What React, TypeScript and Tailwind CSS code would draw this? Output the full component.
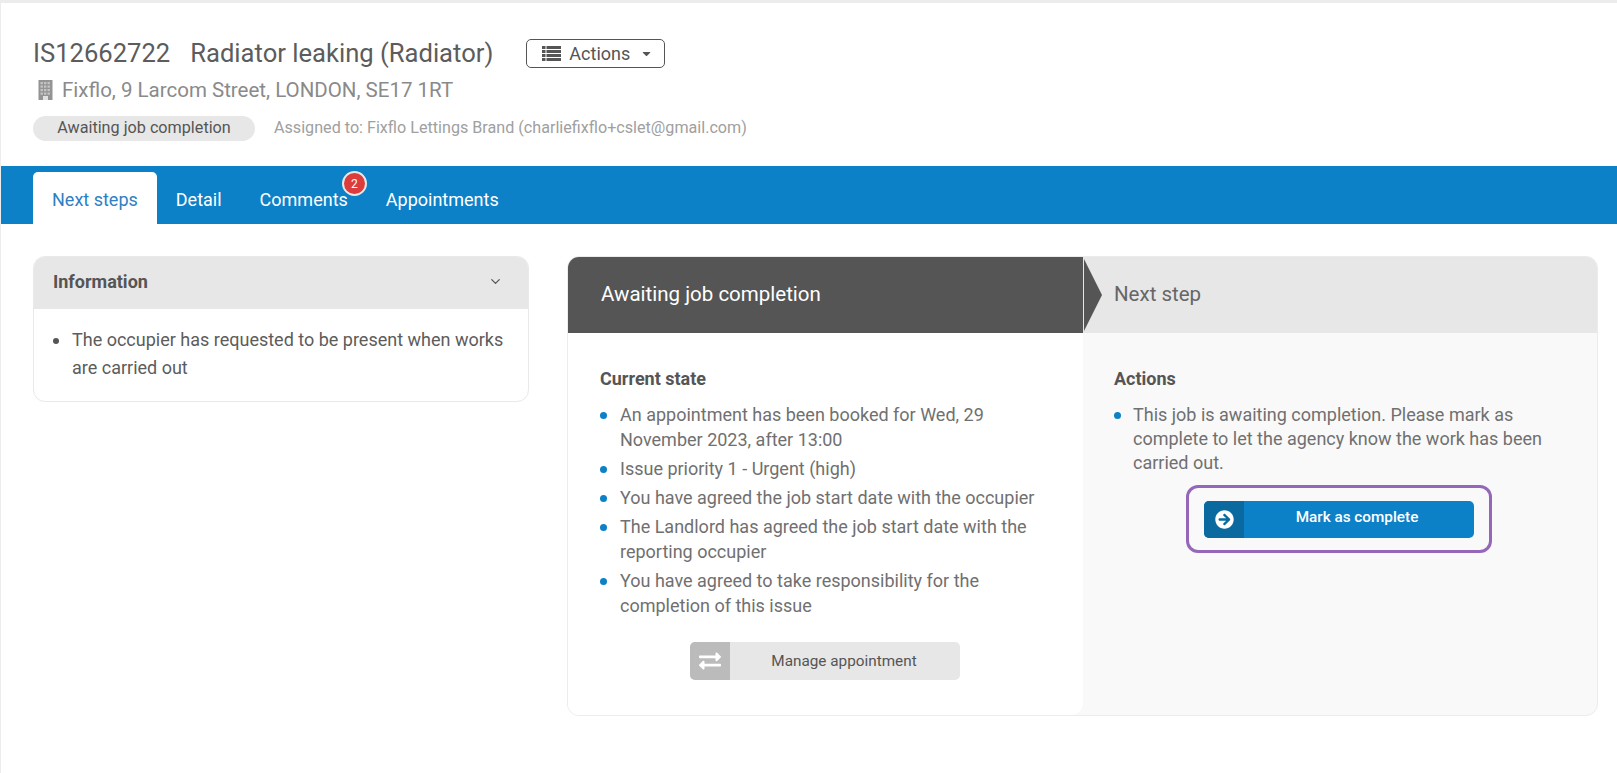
import { ChevronDown } from 'lucide-react';
import { FaArrowCircleRight, FaCaretDown, FaExchangeAlt } from 'react-icons/fa';

const currentState = [
  'An appointment has been booked for Wed, 29 November 2023, after 13:00',
  'Issue priority 1 - Urgent (high)',
  'You have agreed the job start date with the occupier',
  'The Landlord has agreed the job start date with the reporting occupier',
  'You have agreed to take responsibility for the completion of this issue',
];

const windows = [2, 5.5, 9, 12.5].flatMap((y) => [3, 6.5, 10].map((x) => ({ x, y })));

const BuildingIcon: React.FC = () => (
  <svg className="ml-[4px] h-[20px] w-[17px] shrink-0" viewBox="0 0 16 20">
    <rect x="1" y="0" width="14" height="20" fill="#949494" />
    {windows.map((w) => (
      <rect key={`${w.x}-${w.y}`} x={w.x} y={w.y} width="2.4" height="2.2" fill="#c4c4c4" />
    ))}
    <rect x="5.5" y="16" width="5" height="4" fill="#e2e2e2" />
  </svg>
);

const ListIcon: React.FC = () => (
  <svg className="h-[15px] w-[19px] shrink-0" viewBox="0 0 19 15" fill="#555">
    {[0, 4, 8, 12].map((y) => (
      <g key={y}>
        <rect x="0" y={y} width="3.5" height="3" />
        <rect x="4.5" y={y} width="14.5" height="3" />
      </g>
    ))}
  </svg>
);

const Bullet: React.FC<{ text: string; wide?: boolean }> = ({ text, wide }) => (
  <li className={wide ? 'flex gap-[13px]' : 'flex gap-[12px]'}>
    <span className="mt-[9px] h-[7px] w-[7px] shrink-0 rounded-full bg-[#0c81c7]"></span>
    <span>{text}</span>
  </li>
);

const Header: React.FC = () => (
  <div className="h-[163px] px-8 pt-[35px]">
    <div className="flex items-center">
      <h1 className="text-[25.6px] leading-[28px] font-normal text-[#5c5c5c]">
        IS12662722<span className="ml-[20px]">Radiator leaking (Radiator)</span>
      </h1>
      <button className="mt-[1px] ml-[33px] flex h-[29px] w-[139px] items-center gap-[8px] rounded-[5px] border border-[#555] pl-[15px] text-[18px] text-[#555]">
        <ListIcon />
        <span>Actions</span>
        <FaCaretDown className="ml-[2px] h-[13px] w-[13px]" />
      </button>
    </div>
    <div className="mt-[10px] flex items-center gap-[8px] text-[20.5px] leading-[24px] text-[#8a8a8a]">
      <BuildingIcon />
      <span>Fixflo, 9 Larcom Street, LONDON, SE17 1RT</span>
    </div>
    <div className="mt-[14px] flex items-center gap-[19px]">
      <span className="flex h-[25px] w-[222px] items-center justify-center rounded-full bg-[#e7e7e7] text-[16.2px] text-[#555]">
        Awaiting job completion
      </span>
      <span className="text-[16.15px] text-[#a0a0a0]">Assigned to: Fixflo Lettings Brand (charliefixflo+cslet@gmail.com)</span>
    </div>
  </div>
);

const Tabs: React.FC = () => (
  <nav className="flex h-[58px] items-end bg-[#0c81c7] px-8 text-[18px] text-white">
    <a className="flex h-[52px] items-center rounded-t-[5px] bg-white px-[19px] pt-[3px] text-[#2f7fc4]">Next steps</a>
    <a className="flex h-[52px] items-center px-[19px] pt-[3px]">Detail</a>
    <a className="relative flex h-[52px] items-center px-[19px] pt-[3px]">
      Comments
      <span className="absolute top-[-1px] right-0 flex h-[25px] w-[25px] items-center justify-center rounded-full border-2 border-[#e7e7e7] bg-[#dc3c3c] text-[12px]">
        2
      </span>
    </a>
    <a className="flex h-[52px] items-center px-[19px] pt-[3px]">Appointments</a>
  </nav>
);

const InfoPanel: React.FC = () => (
  <section className="h-[146px] w-[496px] shrink-0 overflow-hidden rounded-[12px] border border-[#e9e9e9]">
    <div className="flex h-[52px] items-center justify-between bg-[#e7e7e7] pr-[25px] pb-[3px] pl-[19px] text-[#555]">
      <span className="text-[18px] font-bold">Information</span>
      <ChevronDown className="h-[15px] w-[15px]" />
    </div>
    <ul className="flex gap-[13px] pt-[17px] pr-[20px] pl-[19px] text-[18px] leading-[28px] text-[#5c5c5c]">
      <li className="mt-[12px] h-[6px] w-[6px] shrink-0 rounded-full bg-[#555]"></li>
      <li>The occupier has requested to be present when works are carried out</li>
    </ul>
  </section>
);

const StepsPanel: React.FC = () => (
  <section className="flex h-[460px] w-[1031px] flex-col overflow-hidden rounded-[12px] border border-[#ececec] bg-[#f9f9f9]">
    <div className="flex h-[76px] shrink-0">
      <div className="flex w-[515px] items-center bg-[#555] pb-[2px] pl-[33px] text-[20.5px] text-white">Awaiting job completion</div>
      <div className="relative flex flex-1 items-center bg-[#e7e7e7] pb-[2px] pl-[31px] text-[20.5px] text-[#666]">
        <svg className="absolute top-0 left-0 h-[76px] w-[19px]" viewBox="0 0 19 76">
          <path d="M0 0 L19 38 L0 76 Z" fill="#555" />
          <path d="M0.5 0 L0.5 76" stroke="#e7e7e7" strokeWidth="1" />
        </svg>
        Next step
      </div>
    </div>
    <div className="flex flex-1">
      <div className="w-[515px] rounded-br-[12px] bg-white pt-[35px] pr-[33px] pl-[32px]">
        <h2 className="text-[18px] leading-[22px] font-bold text-[#555]">Current state</h2>
        <ul className="mt-[13px] text-[18px] leading-[24.5px] text-[#707070]">
          {currentState.map((item) => (
            <div className="mt-[4.75px] first:mt-0" key={item}>
              <Bullet text={item} wide />
            </div>
          ))}
        </ul>
        <button className="mx-auto mt-[24px] flex h-[38px] w-[270px] items-stretch overflow-hidden rounded-[5px] bg-[#e7e7e7] text-[15.3px] text-[#555]">
          <span className="flex w-[40px] items-center justify-center bg-[#bbb] text-white">
            <FaExchangeAlt className="h-[22px] w-[22px]" />
          </span>
          <span className="flex flex-1 items-center justify-center pr-[2px]">Manage appointment</span>
        </button>
      </div>
      <div className="flex-1 pt-[35px] pr-[40px] pl-[31px]">
        <h2 className="text-[18px] leading-[22px] font-bold text-[#555]">Actions</h2>
        <ul className="mt-[13px] text-[18px] leading-[24px] text-[#707070]">
          <Bullet text="This job is awaiting completion. Please mark as complete to let the agency know the work has been carried out." />
        </ul>
        <div className="mt-[10px] ml-[72px] flex h-[68px] w-[306px] items-center justify-center rounded-[12px] border-[3px] border-[#9467b8]">
          <button className="flex h-[37px] w-[270px] items-stretch overflow-hidden rounded-[5px] bg-[#0c81c7] text-[15.3px] font-medium text-white">
            <span className="flex w-[40px] items-center justify-center bg-[#0a699f]">
              <FaArrowCircleRight className="h-[19px] w-[19px]" />
            </span>
            <span className="flex flex-1 items-center justify-center pr-[4px] pb-[3px]">Mark as complete</span>
          </button>
        </div>
      </div>
    </div>
  </section>
);

export default function App() {
  return (
    <div className="min-h-[773px] border-t-[3px] border-l border-[#ececec] bg-white font-['Roboto',sans-serif]">
      <Header />
      <Tabs />
      <main className="flex gap-[38px] pt-[32px] pl-[32px]">
        <InfoPanel />
        <StepsPanel />
      </main>
    </div>
  );
}
